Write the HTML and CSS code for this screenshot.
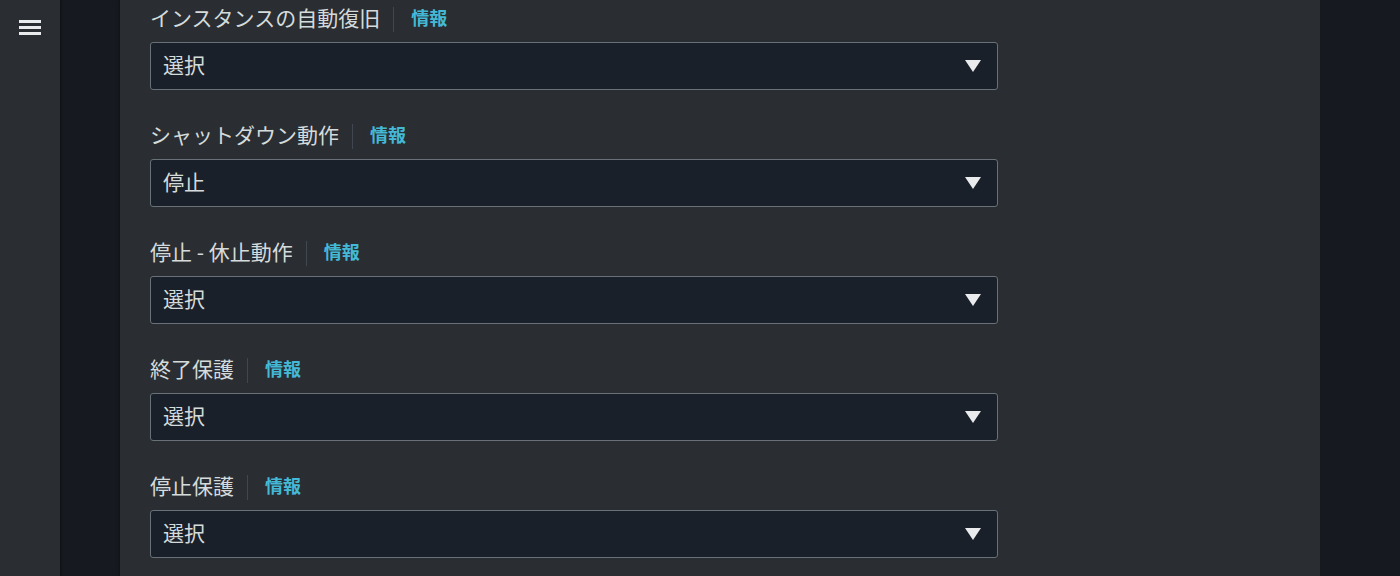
FILE: index.html
```html
<!DOCTYPE html>
<html lang="ja">
<head>
<meta charset="utf-8">
<title>Settings</title>
<link rel="stylesheet" href="styles.css">
</head>
<body>
<div class="app">
  <nav class="sidebar">
    <button class="menu" aria-label="menu">
      <svg width="22" height="15" viewBox="0 0 22 15"><rect x="0" y="0" width="22" height="3" fill="#e9ebed"/><rect x="0" y="6" width="22" height="3" fill="#e9ebed"/><rect x="0" y="12" width="22" height="3" fill="#e9ebed"/></svg>
    </button>
  </nav>
  <div class="gutter"></div>
  <main class="panel">
    <div class="field">
      <div class="label-row"><span class="label">インスタンスの自動復旧</span><span class="divider"></span><a class="info">情報</a></div>
      <div class="select"><span class="value">選択</span><svg class="caret" width="16" height="12" viewBox="0 0 16 12"><path d="M0 0 H16 L8 12 Z" fill="#e9ebed"/></svg></div>
    </div>
    <div class="field">
      <div class="label-row"><span class="label">シャットダウン動作</span><span class="divider"></span><a class="info">情報</a></div>
      <div class="select"><span class="value">停止</span><svg class="caret" width="16" height="12" viewBox="0 0 16 12"><path d="M0 0 H16 L8 12 Z" fill="#e9ebed"/></svg></div>
    </div>
    <div class="field">
      <div class="label-row"><span class="label">停止 - 休止動作</span><span class="divider"></span><a class="info">情報</a></div>
      <div class="select"><span class="value">選択</span><svg class="caret" width="16" height="12" viewBox="0 0 16 12"><path d="M0 0 H16 L8 12 Z" fill="#e9ebed"/></svg></div>
    </div>
    <div class="field">
      <div class="label-row"><span class="label">終了保護</span><span class="divider"></span><a class="info">情報</a></div>
      <div class="select"><span class="value">選択</span><svg class="caret" width="16" height="12" viewBox="0 0 16 12"><path d="M0 0 H16 L8 12 Z" fill="#e9ebed"/></svg></div>
    </div>
    <div class="field">
      <div class="label-row"><span class="label">停止保護</span><span class="divider"></span><a class="info">情報</a></div>
      <div class="select"><span class="value">選択</span><svg class="caret" width="16" height="12" viewBox="0 0 16 12"><path d="M0 0 H16 L8 12 Z" fill="#e9ebed"/></svg></div>
    </div>
  </main>
  <div class="gutter right"></div>
</div>
</body>
</html>
```

FILE: styles.css
```css
html, body {
  margin: 0;
  padding: 0;
  height: 100%;
  overflow: hidden;
  background: #16191f;
  font-family: "Noto Sans CJK JP", "Noto Sans", sans-serif;
  color: #d5dbdb;
}
.app {
  display: flex;
  height: 576px;
}
.sidebar {
  width: 60px;
  flex: none;
  background: #2a2e33;
  box-shadow: 1px 0 2px rgba(0,0,0,0.4);
  position: relative;
  z-index: 1;
}
.menu {
  display: block;
  margin: 20px 0 0 19px;
  padding: 0;
  border: 0;
  background: none;
  width: 22px;
  height: 15px;
}
.menu svg { display: block; }
.gutter {
  width: 60px;
  flex: none;
  background: #16191f;
}
.gutter.right { flex: 1; }
.panel {
  width: 1200px;
  flex: none;
  background: #2a2e33;
  box-shadow: 0 0 3px rgba(0,0,0,0.5);
  padding: 3px 30px 0;
  box-sizing: border-box;
}
.field {
  margin-bottom: 30px;
}
.label-row {
  display: flex;
  align-items: center;
  height: 32px;
  margin-bottom: 7px;
}
.label {
  font-size: 21px;
  line-height: 32px;
  color: #d5dbdb;
  padding-bottom: 4px;
}
.divider {
  width: 1px;
  height: 25px;
  background: #414750;
  margin: 0 17px 0 13px;
}
.info {
  font-size: 18px;
  font-weight: 700;
  color: #44b9d6;
  line-height: 32px;
  padding-bottom: 4px;
}
.select {
  width: 848px;
  height: 48px;
  box-sizing: border-box;
  border: 1px solid #687078;
  border-radius: 3px;
  background: #1a2029;
  display: flex;
  align-items: center;
  justify-content: space-between;
  padding: 0 16px 0 12px;
  font-size: 21px;
  color: #d5dbdb;
}
.value {
  padding-bottom: 5px;
}
.caret { display: block; }
```
